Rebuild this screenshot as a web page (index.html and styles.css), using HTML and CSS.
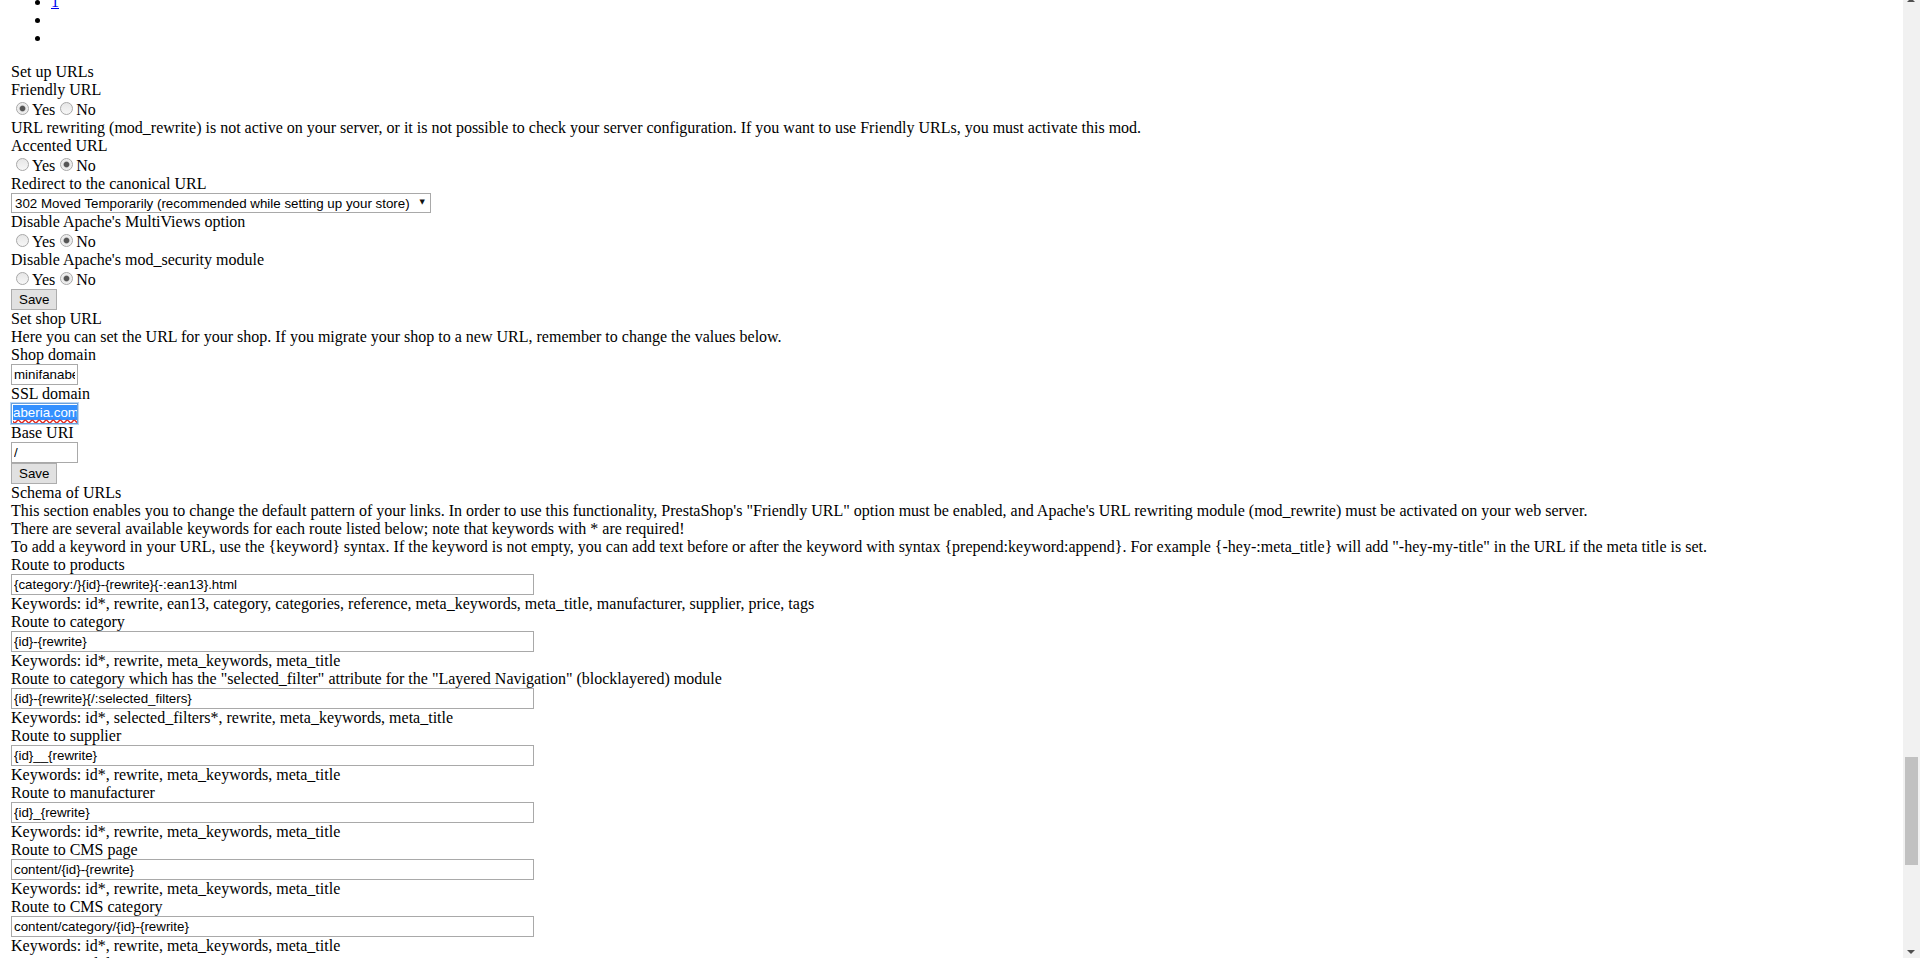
FILE: index.html
```html
<!DOCTYPE html>
<html lang="en">
<head>
  <meta charset="UTF-8" />
  <title>SEO &amp; URLs</title>
  <link rel="stylesheet" href="styles.css">
</head>

<body>
  <ul class="pager">
    <li><a href="#">1</a></li>
    <li></li>
    <li></li>
  </ul>

  <form class="panel">
    <div>Set up URLs</div>
    <div>Friendly URL</div>
    <div class="choice"><input type="radio" name="friendly" checked>Yes<input type="radio" name="friendly">No</div>
    <div>URL rewriting (mod_rewrite) is not active on your server, or it is not possible to check your server configuration. If you want to use Friendly URLs, you must activate this mod.</div>
    <div>Accented URL</div>
    <div class="choice"><input type="radio" name="accented">Yes<input type="radio" name="accented" checked>No</div>
    <div>Redirect to the canonical URL</div>
    <div class="select-wrap">
      <select>
        <option>302 Moved Temporarily (recommended while setting up your store)</option>
        <option>301 Moved Permanently (recommended once you have gone live)</option>
      </select>
    </div>
    <div>Disable Apache's MultiViews option</div>
    <div class="choice"><input type="radio" name="multiviews">Yes<input type="radio" name="multiviews" checked>No</div>
    <div>Disable Apache's mod_security module</div>
    <div class="choice"><input type="radio" name="modsec">Yes<input type="radio" name="modsec" checked>No</div>
    <button type="button">Save</button>
  </form>

  <form class="panel">
    <div>Set shop URL</div>
    <div>Here you can set the URL for your shop. If you migrate your shop to a new URL, remember to change the values below.</div>
    <div>Shop domain</div>
    <input type="text" class="short" value="minifanaberia.com">
    <div>SSL domain</div>
    <div class="short fake-input"><span class="picked">aberia.com</span></div>
    <div>Base URI</div>
    <input type="text" class="short" value="/">
    <button type="button">Save</button>
  </form>

  <form class="panel">
    <div>Schema of URLs</div>
    <div>This section enables you to change the default pattern of your links. In order to use this functionality, PrestaShop's "Friendly URL" option must be enabled, and Apache's URL rewriting module (mod_rewrite) must be activated on your web server.</div>
    <div>There are several available keywords for each route listed below; note that keywords with * are required!</div>
    <div>To add a keyword in your URL, use the {keyword} syntax. If the keyword is not empty, you can add text before or after the keyword with syntax {prepend:keyword:append}. For example {-hey-:meta_title} will add "-hey-my-title" in the URL if the meta title is set.</div>

    <div>Route to products</div>
    <input type="text" class="route" value="{category:/}{id}-{rewrite}{-:ean13}.html">
    <div>Keywords: id*, rewrite, ean13, category, categories, reference, meta_keywords, meta_title, manufacturer, supplier, price, tags</div>

    <div>Route to category</div>
    <input type="text" class="route" value="{id}-{rewrite}">
    <div>Keywords: id*, rewrite, meta_keywords, meta_title</div>

    <div>Route to category which has the "selected_filter" attribute for the "Layered Navigation" (blocklayered) module</div>
    <input type="text" class="route" value="{id}-{rewrite}{/:selected_filters}">
    <div>Keywords: id*, selected_filters*, rewrite, meta_keywords, meta_title</div>

    <div>Route to supplier</div>
    <input type="text" class="route" value="{id}__{rewrite}">
    <div>Keywords: id*, rewrite, meta_keywords, meta_title</div>

    <div>Route to manufacturer</div>
    <input type="text" class="route" value="{id}_{rewrite}">
    <div>Keywords: id*, rewrite, meta_keywords, meta_title</div>

    <div>Route to CMS page</div>
    <input type="text" class="route" value="content/{id}-{rewrite}">
    <div>Keywords: id*, rewrite, meta_keywords, meta_title</div>

    <div>Route to CMS category</div>
    <input type="text" class="route" value="content/category/{id}-{rewrite}">
    <div>Keywords: id*, rewrite, meta_keywords, meta_title</div>

    <div>Route to modules</div>
    <input type="text" class="route" value="module/{module}{/:controller}">
    <div>Keywords: module*, controller*</div>
  </form>

  <div class="scrollbar">
    <span class="arrow up"></span>
    <span class="thumb"></span>
    <span class="arrow down"></span>
  </div>
</body>
</html>
```

FILE: styles.css
```css
html, body {
  overflow: hidden;
  height: 100%;
}

body {
  margin: 0;
  padding: 0 17px 0 11px;
  font-family: 'Liberation Serif', 'Times New Roman', serif;
  font-size: 16px;
  color: #000;
  background: #fff;
}

a {
  color: #0000ee;
}

.pager {
  margin: -7px 0 16px;
  padding-left: 40px;
}

.pager li {
  min-height: 18px;
}

.panel {
  margin: 0;
}

.choice input[type="radio"] {
  appearance: none;
  -webkit-appearance: none;
  position: relative;
  width: 13px;
  height: 13px;
  margin: 3px 3px 0 5px;
  border: 1px solid #a8a8a8;
  border-radius: 50%;
  background: linear-gradient(#e6e6e6, #f7f7f7);
  box-sizing: border-box;
}

.choice input[type="radio"]:checked {
  background: radial-gradient(circle, #555 0, #555 2.2px, #9a9a9a 2.8px, #e8e8e8 3.4px, #f3f3f3 6px);
}

.select-wrap {
  position: relative;
  width: fit-content;
}

.select-wrap select {
  display: block;
  appearance: none;
  -webkit-appearance: none;
  height: 20px;
  padding: 0 20px 0 3px;
  border: 1px solid #a9a9a9;
  border-radius: 0;
  background: #fff;
  color: #000;
  font-family: 'Liberation Sans', Arial, sans-serif;
  font-size: 13.33px;
}

.select-wrap::after {
  content: "\25BC";
  position: absolute;
  right: 6px;
  top: 5px;
  font-family: 'DejaVu Sans', sans-serif;
  font-size: 7px;
  color: #111;
  pointer-events: none;
}

button {
  display: block;
  height: 21px;
  margin: 0;
  padding: 1px 7px;
  border: 1px solid #adadad;
  border-radius: 0;
  background: #e1e1e1;
  color: #000;
  font-family: 'Liberation Sans', Arial, sans-serif;
  font-size: 13.33px;
}

input[type="text"], .fake-input {
  display: block;
  box-sizing: border-box;
  height: 21px;
  margin: 0;
  padding: 1px 2px;
  border: 1px solid #a9a9a9;
  background: #fff;
  color: #000;
  font-family: 'Liberation Sans', Arial, sans-serif;
  font-size: 13.33px;
}

.short {
  width: 67px;
}

.route {
  width: 523px;
}

.fake-input {
  overflow: hidden;
  white-space: nowrap;
  border-color: #6aa0dc;
  box-shadow: 0 0 0 1px #b9d5f2;
  line-height: 16px;
  padding-left: 1px;
}

.picked {
  background: #3390ff;
  color: #fff;
  text-decoration: underline wavy #e0281e;
  text-decoration-skip-ink: none;
  text-underline-offset: 2px;
}

.scrollbar {
  position: fixed;
  top: 0;
  right: 0;
  width: 17px;
  height: 100%;
  background: #f1f1f1;
}

.thumb {
  position: absolute;
  left: 2px;
  right: 2px;
  top: 757px;
  height: 108px;
  background: #c1c1c1;
}

.arrow {
  position: absolute;
  left: 4px;
  width: 0;
  height: 0;
  border-left: 4px solid transparent;
  border-right: 4px solid transparent;
}

.arrow.up {
  top: -2px;
  border-bottom: 4px solid #505050;
}

.arrow.down {
  bottom: 4px;
  border-top: 4px solid #505050;
}
```
